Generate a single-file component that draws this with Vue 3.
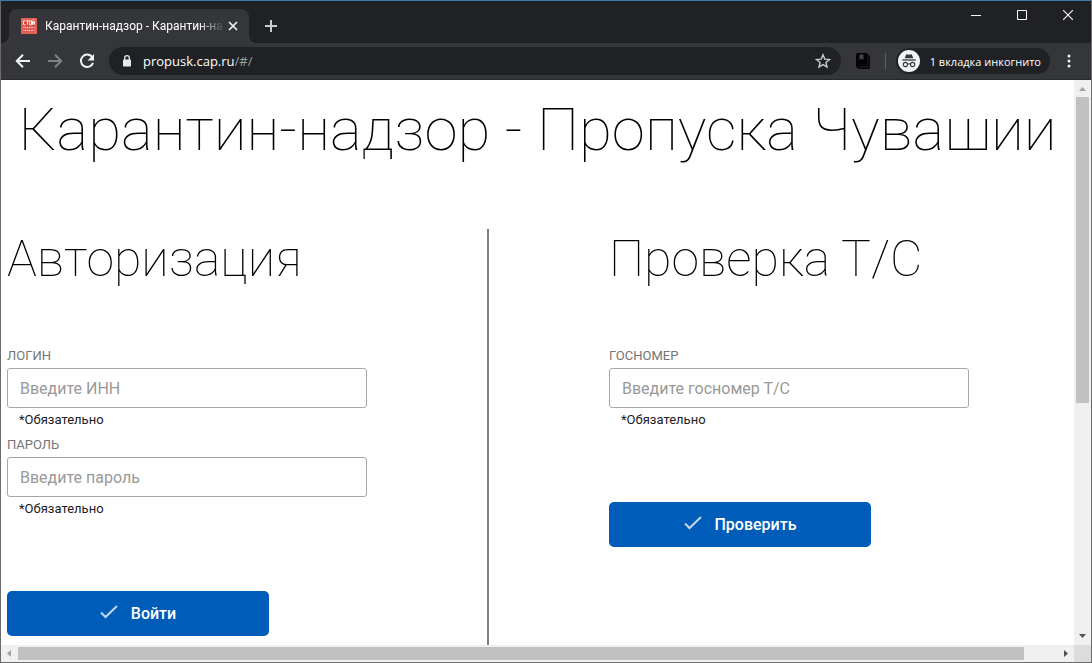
<script setup>
import { ref } from 'vue'

const address = ref('/#/')
const login = ref('')
const password = ref('')
const plate = ref('')
</script>

<template>
  <div class="window">
    <header class="titlebar">
      <div class="tab">
        <svg class="favicon" width="16" height="16" viewBox="0 0 16 16" aria-hidden="true">
          <rect width="16" height="16" fill="#dc4437" />
          <rect x="1" y="1" width="14" height="14" fill="none" stroke="#f0a79f" stroke-width=".6" />
          <g fill="none" stroke="#fff" stroke-width=".9">
            <path d="M4.6 2.8H2.6V6.8H4.6M5.2 2.8H8M6.6 2.8V6.8M8.7 2.8H10.5V6.8H8.7ZM11.5 2.8V6.8L13.4 3V6.8M11.8 1.9H13.2" />
          </g>
          <path d="M2.3 9.5H13.7M2.3 12.5H13.7" stroke="#f7c9c4" stroke-width="1.6" stroke-dasharray="1.3 .5" />
        </svg>
        <span class="tab-title">Карантин-надзор - Карантин-на</span>
        <button class="icon-btn tab-close" aria-label="Закрыть вкладку">
          <svg width="10" height="10" viewBox="0 0 10 10"><path d="M1 1L9 9M9 1L1 9" stroke="#f1f3f4" stroke-width="1.7" /></svg>
        </button>
      </div>
      <button class="icon-btn new-tab" aria-label="Новая вкладка">
        <svg width="12" height="12" viewBox="0 0 12 12"><path d="M6 0V12M0 6H12" stroke="#c9cbcd" stroke-width="2" /></svg>
      </button>
      <div class="window-controls">
        <button class="icon-btn" aria-label="Свернуть">
          <svg width="10" height="10" viewBox="0 0 10 10"><path d="M0 5.5H10" stroke="#fff" /></svg>
        </button>
        <button class="icon-btn" aria-label="Развернуть">
          <svg width="10" height="10" viewBox="0 0 10 10"><path d="M.5 .5H9.5V9.5H.5Z" fill="none" stroke="#fff" /></svg>
        </button>
        <button class="icon-btn" aria-label="Закрыть">
          <svg width="10" height="10" viewBox="0 0 10 10"><path d="M0 0L10 10M10 0L0 10" stroke="#fff" stroke-width="1.1" /></svg>
        </button>
      </div>
    </header>

    <nav class="toolbar">
      <button class="icon-btn nav-btn" aria-label="Назад">
        <svg width="16" height="16" viewBox="0 0 16 16"><path d="M15 8H2M8 1.8L1.8 8L8 14.2" fill="none" stroke="#f1f3f4" stroke-width="2" /></svg>
      </button>
      <button class="icon-btn nav-btn" aria-label="Вперёд" disabled>
        <svg width="16" height="16" viewBox="0 0 16 16"><path d="M1 8H14M8 1.8L14.2 8L8 14.2" fill="none" stroke="#808285" stroke-width="2" /></svg>
      </button>
      <button class="icon-btn nav-btn" aria-label="Обновить">
        <svg width="16" height="16" viewBox="0 0 16 16">
          <path d="M13.2 4.2A6.2 6.2 0 1 0 14 9.8" fill="none" stroke="#f1f3f4" stroke-width="2" />
          <path d="M15 1V7.4H8.6Z" fill="#f1f3f4" />
        </svg>
      </button>
      <div class="omnibox">
        <svg class="lock" width="10" height="12" viewBox="0 0 10 12" aria-hidden="true">
          <rect x="1" y="4.5" width="8" height="7" rx=".8" fill="#e8eaed" />
          <path d="M2.7 5V3A2.3 2.3 0 0 1 7.3 3V5" fill="none" stroke="#e8eaed" stroke-width="1.3" />
        </svg>
        <span class="host">propusk.cap.ru</span>
        <input v-model="address" class="path" aria-label="Адресная строка" />
        <button class="icon-btn" aria-label="Добавить в закладки">
          <svg width="16" height="16" viewBox="0 0 16 16"><path d="M8 1.8L9.8 6.1L14.5 6.5L10.9 9.5L12 14.1L8 11.6L4 14.1L5.1 9.5L1.5 6.5L6.2 6.1Z" fill="none" stroke="#c8cacd" stroke-width="1.4" /></svg>
        </button>
      </div>
      <button class="icon-btn extension" aria-label="Расширение">
        <svg width="14" height="16" viewBox="0 0 14 16">
          <path d="M2 0H11L12 2L14 3V14Q14 16 12 16H3L0 14V2Q0 0 2 0Z" fill="#050505" />
          <path d="M3.5 1.5H7.5V7L5.5 5.5L3.5 7Z" fill="#45474a" />
          <path d="M12 2.5V14H3" fill="none" stroke="#2b2c2e" stroke-width=".7" />
        </svg>
      </button>
      <span class="separator"></span>
      <button class="incognito">
        <svg width="22" height="22" viewBox="0 0 22 22" aria-hidden="true">
          <circle cx="11" cy="11" r="11" fill="#f1f3f4" />
          <path d="M8.3 4.3Q11 5.2 13.7 4.3L15.3 8.2H6.7Z" fill="#35363a" />
          <path d="M4.3 10H17.7" stroke="#35363a" stroke-width="1.3" />
          <g fill="none" stroke="#35363a" stroke-width="1.1"><circle cx="7.4" cy="14.5" r="2.1" /><circle cx="14.6" cy="14.5" r="2.1" /><path d="M9.5 14.2Q11 13.3 12.5 14.2" /></g>
        </svg>
        <span>1 вкладка инкогнито</span>
      </button>
      <button class="icon-btn menu" aria-label="Меню">
        <svg width="4" height="14" viewBox="0 0 4 14" fill="#f1f3f4"><circle cx="2" cy="2" r="1.5" /><circle cx="2" cy="7" r="1.5" /><circle cx="2" cy="12" r="1.5" /></svg>
      </button>
    </nav>

    <div class="viewport">
      <main class="page">
        <h1>Карантин-надзор - Пропуска Чувашии</h1>
        <div class="columns">
          <form class="panel" @submit.prevent>
            <h2>Авторизация</h2>
            <div class="field">
              <label for="login">ЛОГИН</label>
              <input id="login" v-model="login" type="text" placeholder="Введите ИНН" />
              <small>*Обязательно</small>
            </div>
            <div class="field">
              <label for="password">ПАРОЛЬ</label>
              <input id="password" v-model="password" type="password" placeholder="Введите пароль" />
              <small>*Обязательно</small>
            </div>
            <button class="submit" type="submit">
              <svg width="18" height="18" viewBox="0 0 18 18" aria-hidden="true"><path d="M1 7.5L5.5 12L17 1" fill="none" stroke="#c5d8ef" stroke-width="2" /></svg>
              Войти
            </button>
          </form>
          <form class="panel check" @submit.prevent>
            <h2>Проверка Т/С</h2>
            <div class="field">
              <label for="plate">ГОСНОМЕР</label>
              <input id="plate" v-model="plate" type="text" placeholder="Введите госномер Т/С" />
              <small>*Обязательно</small>
            </div>
            <button class="submit" type="submit">
              <svg width="18" height="18" viewBox="0 0 18 18" aria-hidden="true"><path d="M1 7.5L5.5 12L17 1" fill="none" stroke="#c5d8ef" stroke-width="2" /></svg>
              Проверить
            </button>
          </form>
        </div>
      </main>
      <div class="scroll vertical">
        <svg width="17" height="17" viewBox="0 0 17 17"><path d="M5 11L8.5 7L12 11Z" fill="#a3a3a3" /></svg>
        <div class="track"><div class="thumb"></div></div>
        <svg width="17" height="17" viewBox="0 0 17 17"><path d="M5 6L8.5 10L12 6Z" fill="#505050" /></svg>
      </div>
      <div class="scroll horizontal">
        <svg width="17" height="17" viewBox="0 0 17 17"><path d="M10 5L6 8.5L10 12Z" fill="#a3a3a3" /></svg>
        <div class="track"><div class="thumb"></div></div>
        <svg width="17" height="17" viewBox="0 0 17 17"><path d="M7 5L11 8.5L7 12Z" fill="#505050" /></svg>
      </div>
      <div class="corner"></div>
    </div>
  </div>
</template>

<style>
body {
  margin: 0;
  overflow: hidden;
}
</style>

<style scoped>
* {
  box-sizing: border-box;
}
.window {
  display: flex;
  flex-direction: column;
  height: 100vh;
  border: 1px solid #6b6b6d;
  border-top-color: #3c78a8;
  background: #202124;
  font-family: "Open Sans", "Noto Sans", sans-serif;
  color: #fff;
}
button {
  font: inherit;
  color: inherit;
  border: 0;
  padding: 0;
  background: none;
}
svg {
  display: block;
  flex: none;
}
.icon-btn {
  display: flex;
  align-items: center;
  justify-content: center;
  flex: none;
}

.titlebar {
  display: flex;
  flex: none;
  height: 42px;
  padding-left: 8px;
}
.tab {
  position: relative;
  display: flex;
  align-items: center;
  width: 240px;
  height: 34px;
  margin-top: 8px;
  padding: 0 8px 0 12px;
  border-radius: 8px 8px 0 0;
  background: #35363a;
}
.tab::before,
.tab::after {
  content: "";
  position: absolute;
  bottom: 0;
  width: 8px;
  height: 8px;
}
.tab::before {
  left: -8px;
  background: radial-gradient(circle at 0 0, #202124 8px, #35363a 8px);
}
.tab::after {
  right: -8px;
  background: radial-gradient(circle at 100% 0, #202124 8px, #35363a 8px);
}
.tab-title {
  flex: 1;
  margin-left: 8px;
  white-space: nowrap;
  font-family: Roboto, sans-serif;
  font-size: 12px;
  mask-image: linear-gradient(to right, #000 85%, transparent);
}
.tab-close {
  width: 16px;
  height: 16px;
}
.new-tab {
  width: 28px;
  height: 28px;
  margin: 11px 0 0 8px;
}
.window-controls {
  display: flex;
  height: 28px;
  margin-left: auto;
}
.window-controls .icon-btn {
  width: 46px;
}

.toolbar {
  display: flex;
  flex: none;
  align-items: center;
  height: 37px;
  padding: 0 14px 0 6px;
  border-bottom: 1px solid #28292c;
  background: #35363a;
}
.nav-btn {
  width: 32px;
  height: 32px;
}
.omnibox {
  display: flex;
  flex: 1;
  align-items: center;
  min-width: 0;
  height: 28px;
  margin-left: 6px;
  padding: 0 10px 0 13px;
  border-radius: 14px;
  background: #202124;
  font-size: 13px;
}
.host {
  margin-left: 11px;
}
.path {
  flex: 1;
  min-width: 0;
  padding: 0;
  border: 0;
  outline: 0;
  background: none;
  font: inherit;
  color: #9aa0a6;
}
.extension {
  margin-left: 15px;
}
.separator {
  width: 1px;
  height: 16px;
  margin: 0 10px 0 15px;
  background: #5f6165;
}
.incognito {
  display: flex;
  align-items: center;
  gap: 10px;
  height: 26px;
  padding: 0 9px 0 2px;
  border-radius: 13px;
  background: #202124;
  font-size: 11px;
  white-space: nowrap;
}
.menu {
  width: 16px;
  height: 28px;
  margin-left: 11px;
}

.viewport {
  display: grid;
  flex: 1;
  grid-template-columns: minmax(0, 1fr) 17px;
  grid-template-rows: minmax(0, 1fr) 17px;
  min-height: 0;
  background: #fff;
}
.page {
  display: flex;
  flex-direction: column;
  overflow: hidden;
  font-family: Roboto, sans-serif;
  color: #000;
}
h1,
h2 {
  margin: 0;
  font-weight: 100;
  white-space: nowrap;
}
h1 {
  padding-top: 12px;
  font-size: 60px;
  line-height: 76px;
  text-align: center;
}
.columns {
  display: grid;
  flex: 1;
  grid-template-columns: 488fr 585fr;
  margin-top: 61px;
}
.panel {
  padding: 0 6px;
  border-right: 2px solid #808080;
}
.check {
  padding-left: 120px;
  border-right: 0;
}
h2 {
  margin-bottom: 57px;
  font-size: 50px;
  line-height: 60px;
}
.field {
  display: flex;
  flex-direction: column;
  max-width: 360px;
  height: 89px;
}
.field label {
  font-size: 13px;
  line-height: 20px;
  color: #757575;
}
.field input {
  height: 40px;
  margin-top: 2px;
  padding: 0 12px;
  border: 1px solid #a6a6a6;
  border-radius: 3px;
  background: #fff;
  font: 16px Roboto, sans-serif;
  color: #212121;
}
.field input::placeholder {
  color: #999;
  opacity: 1;
}
.field small {
  padding-left: 12px;
  font-size: 13px;
  line-height: 24px;
  color: #212121;
}
.submit {
  display: flex;
  align-items: center;
  justify-content: center;
  gap: 13px;
  width: 262px;
  height: 45px;
  margin-top: 67px;
  border-radius: 5px;
  background: #005cb9;
  font-size: 16px;
  font-weight: 500;
  color: #fff;
}

.scroll {
  display: flex;
  background: #f0f0f0;
}
.vertical {
  flex-direction: column;
}
.track {
  flex: 1;
}
.thumb {
  background: #c1c1c1;
}
.vertical .thumb {
  height: 57.6%;
  margin: 0 2px;
}
.horizontal .track {
  display: flex;
}
.horizontal .thumb {
  width: 96.8%;
  margin: 2px 0;
}
.corner {
  background: #dcdcdc;
}
</style>
